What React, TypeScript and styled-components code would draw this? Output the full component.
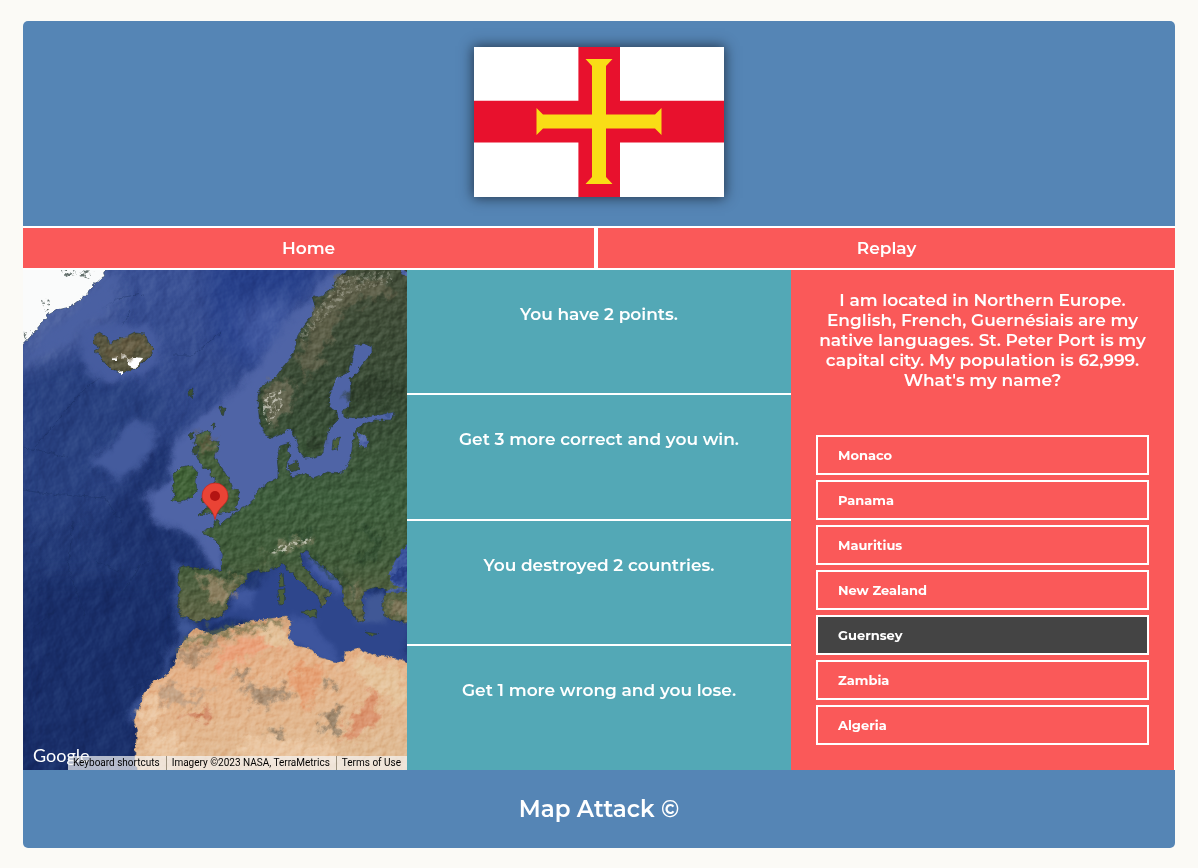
import { useState } from "react";
import styled, { createGlobalStyle } from "styled-components";

const colors = {
  page: "#fbfaf6",
  blue: "#5585b5",
  coral: "#fa5959",
  teal: "#53a8b6",
  dark: "#444444",
  line: "#ffffff",
};

const GlobalStyle = createGlobalStyle`
  * { box-sizing: border-box; }
  body {
    margin: 0;
    background: ${colors.page};
    color: #fff;
    font-family: Montserrat, Inter, "Liberation Sans", sans-serif;
  }
`;

const Page = styled.div`
  padding: 21px 23px 20px;
`;

const Game = styled.div`
  background: ${colors.line};
  border-radius: 5px;
  overflow: hidden;
`;

const Header = styled.header`
  display: flex;
  justify-content: center;
  padding: 26px 20px 29px;
  background: ${colors.blue};
`;

const FlagImage = styled.svg`
  display: block;
  width: 250px;
  height: 150px;
  box-shadow: 0 0 12px 1px rgba(20, 28, 40, 0.75);
`;

const Nav = styled.nav`
  display: grid;
  grid-template-columns: 99fr 100fr;
  gap: 4px;
  padding: 2px 0;
`;

const NavLink = styled.a`
  padding: 10px;
  background: ${colors.coral};
  color: #fff;
  font-size: 17px;
  font-weight: 600;
  line-height: 20px;
  text-align: center;
  text-decoration: none;
`;

const Board = styled.main`
  display: grid;
  grid-template-columns: repeat(3, minmax(0, 1fr));
  min-height: 500px;
`;

const MapPanel = styled.section`
  display: grid;
  grid-template: minmax(0, 1fr) / minmax(0, 1fr);
  overflow: hidden;
  background: #20386f;

  > * {
    grid-area: 1 / 1;
  }
`;

const MapImage = styled.svg`
  display: block;
  width: 100%;
  height: 100%;
`;

const MapLogo = styled.span`
  align-self: end;
  justify-self: start;
  padding: 0 0 3px 10px;
  font-family: Lato, sans-serif;
  font-size: 18px;
  line-height: 24px;
`;

const MapCredits = styled.div`
  align-self: end;
  justify-self: end;
  display: flex;
  height: 14px;
  background: rgba(245, 245, 245, 0.7);
  color: #000;
  font-family: Roboto, sans-serif;
  font-size: 10px;
  line-height: 14px;
  white-space: nowrap;

  > * {
    padding: 0 6px 0 5px;
  }
  > * + * {
    border-left: 1px solid rgba(120, 110, 90, 0.7);
  }
`;

const CreditButton = styled.button`
  border: 0;
  background: none;
  color: inherit;
  font: inherit;
  cursor: pointer;
`;

const CreditLink = styled.a`
  color: inherit;
  text-decoration: none;
`;

const Stats = styled.section`
  display: grid;
  grid-template-rows: 123fr 124fr 123fr 124fr;
  gap: 2px;
`;

const Stat = styled.p`
  margin: 0;
  padding: 34px 20px;
  background: ${colors.teal};
  font-size: 17px;
  font-weight: 600;
  line-height: 20px;
  text-align: center;
`;

const Quiz = styled.section`
  display: flex;
  flex-direction: column;
  gap: 45px;
  margin-right: 1px;
  padding: 20px 25px 25px;
  background: ${colors.coral};
`;

const Question = styled.p`
  margin: 0;
  font-size: 17px;
  font-weight: 600;
  line-height: 20px;
  text-align: center;
`;

const Answers = styled.div`
  display: flex;
  flex-direction: column;
  gap: 5px;
`;

const Answer = styled.button<{ $active: boolean }>`
  height: 40px;
  padding: 0 20px;
  border: 2px solid ${colors.line};
  background: ${({ $active }) => ($active ? colors.dark : colors.coral)};
  color: #fff;
  font-family: inherit;
  font-size: 13px;
  font-weight: 700;
  text-align: left;
  cursor: pointer;
`;

const Footer = styled.footer`
  padding: 24px 20px;
  background: ${colors.blue};
  font-size: 23px;
  font-weight: 600;
  line-height: 30px;
  text-align: center;
`;

function GuernseyFlag() {
  return (
    <FlagImage viewBox="0 0 250 150" role="img" aria-label="Flag">
      <rect width="250" height="150" fill="#fff" />
      <path d="M104.4 0h41.6v53.8H250v41.6H146V150h-41.6V95.4H0V53.8h104.4z" fill="#e8112d" />
      <path
        d="M111.5 12h27l-6.5 7v48.5h49l6.5-6.5v27l-6.5-6.5h-49V130l6.5 7h-27l6.5-7V81.500h-49L62.500 88V61l6.500 6.500h49V19z"
        fill="#f9dd16"
      />
    </FlagImage>
  );
}

const EUROPE =
  "M390 -5L325 -5L325 0L314 8L310 17L299 25L289 28L292 35L290 45L282 55L275 65L272 78L268 87L260 97L252 108L240 115L235 125L235 138L237 153L242 165L250 168L260 163L268 158L272 168L277 182L282 188L292 187L300 183L304 165L307 158L315 150L314 142L306 137L306 123L315 108L325 102L329 88L332 76L342 73L349 76L349 83L339 95L334 102L327 108L328 123L326 138L319 140L320 147L339 148L355 145L372 142L369 150L352 150L335 157L332 162L330 172L328 188L320 203L305 202L290 208L282 203L269 207L264 200L263 193L268 186L265 181L267 172L257 175L254 187L255 198L255 208L242 215L235 220L229 232L212 243L202 251L197 256L194 249L190 257L179 262L187 267L192 270L197 275L199 283L198 300L174 299L160 296L156 298L155 307L157 320L155 333L157 347L164 347L171 352L180 350L197 347L205 338L204 330L212 320L224 310L225 303L234 300L242 302L254 297L259 293L267 302L275 310L284 317L294 325L299 337L303 333L302 326L307 327L310 323L299 317L289 307L280 295L277 283L284 280L289 288L302 298L314 308L320 318L320 332L329 342L335 353L342 350L340 340L339 330L340 322L352 318L365 320L360 330L360 343L369 350L390 353Z";

const AFRICA =
  "M174 357L164 367L155 380L151 395L144 405L132 410L122 423L117 437L111 450L114 460L112 487L114 505L390 505L390 395L379 390L365 387L349 385L335 378L322 382L321 390L315 393L295 387L289 380L272 375L265 367L268 353L264 347L245 349L225 352L209 357L192 365L179 361Z";

const BRITAIN =
  "M174 165L180 161L188 162L186 170L196 172L192 187L199 198L205 208L209 218L217 222L215 230L212 236L214 240L199 243L190 244L184 243L175 247L180 240L190 234L179 231L180 225L189 222L192 213L192 208L187 207L188 199L180 198L174 185L175 177L172 172Z";

const IRELAND = "M157 198L169 196L174 202L172 212L173 222L167 228L157 232L149 231L151 225L149 218L152 212L150 205Z";

const ICELAND =
  "M70 67L77 63L84 67L86 75L94 69L104 67L112 63L122 64L125 72L130 77L129 84L120 93L109 100L97 103L89 100L82 93L77 85L71 82L77 78L71 74Z";

const GREENLAND = "M-5 -5L84 -5L84 0L79 8L69 17L60 27L47 37L34 40L25 45L17 55L7 67L-5 80Z";

function SatelliteMap() {
  return (
    <MapImage viewBox="0 0 384 500" preserveAspectRatio="xMidYMid slice" role="img" aria-label="Satellite map of Europe">
      <defs>
        <linearGradient id="ocean" x1="0" y1="0" x2="0" y2="1">
          <stop offset="0" stopColor="#3b5296" />
          <stop offset="0.3" stopColor="#2f4688" />
          <stop offset="0.5" stopColor="#253c7a" />
          <stop offset="0.75" stopColor="#1a306b" />
          <stop offset="1" stopColor="#162a64" />
        </linearGradient>
        <linearGradient id="europe" x1="0" y1="0" x2="0" y2="1">
          <stop offset="0" stopColor="#424c38" />
          <stop offset="0.4" stopColor="#364933" />
          <stop offset="0.65" stopColor="#3d5c3b" />
          <stop offset="0.82" stopColor="#405a39" />
          <stop offset="1" stopColor="#5f6344" />
        </linearGradient>
        <linearGradient id="sahara" x1="0" y1="0" x2="0.3" y2="1">
          <stop offset="0" stopColor="#cf9f78" />
          <stop offset="0.4" stopColor="#e5b288" />
          <stop offset="1" stopColor="#e0ba92" />
        </linearGradient>
        <filter id="soft" x="-20%" y="-20%" width="140%" height="140%" colorInterpolationFilters="sRGB">
          <feGaussianBlur stdDeviation="3" result="b" />
          <feTurbulence type="fractalNoise" baseFrequency="0.04" numOctaves="4" seed="5" result="n" />
          <feDisplacementMap in="b" in2="n" scale="18" xChannelSelector="R" yChannelSelector="G" />
        </filter>
        <filter id="softer" x="-30%" y="-30%" width="160%" height="160%" colorInterpolationFilters="sRGB">
          <feGaussianBlur stdDeviation="9" />
        </filter>
        <filter id="coast" x="-5%" y="-5%" width="110%" height="110%" colorInterpolationFilters="sRGB">
          <feTurbulence type="fractalNoise" baseFrequency="0.18" numOctaves="3" seed="4" result="n" />
          <feDisplacementMap in="SourceGraphic" in2="n" scale="5" xChannelSelector="R" yChannelSelector="G" />
          <feGaussianBlur stdDeviation="0.4" />
        </filter>
        <filter id="blotch" x="-20%" y="-20%" width="140%" height="140%" colorInterpolationFilters="sRGB">
          <feGaussianBlur stdDeviation="2" result="b" />
          <feTurbulence type="fractalNoise" baseFrequency="0.09" numOctaves="4" seed="9" result="n" />
          <feDisplacementMap in="b" in2="n" scale="26" xChannelSelector="R" yChannelSelector="G" />
        </filter>
        <filter id="snow" x="-20%" y="-20%" width="140%" height="140%" colorInterpolationFilters="sRGB">
          <feTurbulence type="fractalNoise" baseFrequency="0.28" numOctaves="3" seed="2" result="n" />
          <feColorMatrix in="n" values="0 0 0 0 1  0 0 0 0 1  0 0 0 0 1  5 0 0 0 -2.4" result="m" />
          <feComposite in="SourceGraphic" in2="m" operator="in" />
        </filter>
        <filter id="relief" x="0" y="0" width="100%" height="100%" colorInterpolationFilters="sRGB">
          <feTurbulence type="fractalNoise" baseFrequency="0.13" numOctaves="5" seed="7" result="n" />
          <feDiffuseLighting in="n" surfaceScale="1.3" lightingColor="#fff" result="l">
            <feDistantLight azimuth="225" elevation="32" />
          </feDiffuseLighting>
          <feComposite in="l" in2="SourceGraphic" operator="in" />
        </filter>
        <filter id="seabed" x="0" y="0" width="100%" height="100%" colorInterpolationFilters="sRGB">
          <feTurbulence type="fractalNoise" baseFrequency="0.035 0.03" numOctaves="5" seed="12" result="n" />
          <feDiffuseLighting in="n" surfaceScale="2.5" lightingColor="#fff">
            <feDistantLight azimuth="205" elevation="31" />
          </feDiffuseLighting>
        </filter>
      </defs>

      <rect width="384" height="500" fill="url(#ocean)" />
      <g filter="url(#softer)">
        <path d="M182 -10H305L270 35L225 100L190 70Z" fill="#27408a" />
        <path d="M0 100L60 90L125 120L150 130L135 150L100 175L60 230L0 260Z" fill="#28407f" />
        <path d="M0 310H150V500H0Z" fill="#192e69" />
        <path d="M140 165L155 185L130 240L185 285L140 310L70 270Z" fill="#1c316d" />
        <path d="M0 10L95 0L90 55L0 105Z" fill="#4b609f" />
        <path d="M215 40L245 28L270 35L262 75L235 95L215 70Z" fill="#4058a0" />
      </g>
      <rect width="384" height="500" filter="url(#seabed)" style={{ mixBlendMode: "soft-light" }} opacity="0.42" />
      <g fill="none" stroke="#142957" strokeWidth="1" opacity="0.35" filter="url(#coast)">
        <path d="M0 178L16 180L45 187M0 220L25 224L82 228M50 252L45 298L62 345M8 360L32 340M150 85L170 85L198 62M72 290L95 302M12 177L60 120L82 104M82 228L98 252" />
        <path d="M98 58L108 40M78 40L95 28L120 24M130 470L140 455M105 420L135 405M100 322L118 295L132 288" />
      </g>
      <g filter="url(#soft)">
        <path d="M92 165L118 150L133 165L130 185L98 212L88 200L65 190Z" fill="#445b9d" />
        <path d="M0 95L20 68L80 10L95 5L90 35L50 68L18 88L0 98Z" fill="#4a60a2" />
        <path d="M62 60L85 55L120 52L140 72L138 92L118 108L85 112L55 95Z" fill="#465c9f" />
        <path d="M330 -5L384 -5V220L280 220L215 262L165 250L130 242L120 228L145 205L150 175L185 140L215 115L238 90L270 45L290 20Z" fill="#4f64a6" />
        <path d="M155 200L225 200L240 225L200 262L206 300L190 302L172 268L128 247L122 228Z" fill="#4f64a6" />
        <path d="M150 295H160V350L178 356L160 372L110 460L105 450L135 405L155 370Z" fill="#3f5899" />
        <path d="M165 352L195 345L260 290L320 300L384 350V400L260 395L240 350Z" fill="#2e468c" />
        <path d="M205 325L224 315L235 320L225 336L210 340Z" fill="#40589f" />
        <path d="M262 345L292 350L310 380L315 398L285 385L262 365Z" fill="#3d559d" />
        <path d="M275 280L290 285L322 312L318 325L300 315Z" fill="#465ca5" />
        <path d="M340 325H363V355L335 355Z" fill="#405896" />
      </g>

      <g filter="url(#coast)">
        <path d={GREENLAND} fill="#fafbfb" stroke="#2c4058" strokeWidth="0.600" />
        <g stroke="#263b34" strokeWidth="0.600">
          <path d={ICELAND} fill="#57553e" />
          <path d={IRELAND} fill="#3f6035" />
          <path d={BRITAIN} fill="#425c39" />
          <path d={EUROPE} fill="url(#europe)" />
          <path d="M256 306L260 303L261 316L257 317ZM255 320L262 319L261 334L256 335ZM278 342L294 340L293 349ZM342 362L355 364L348 366ZM310 170L317 167L314 179L309 180Z" fill="#4b5f3a" />
          <path d="M265 195L274 191L277 199L268 202ZM165 120L171 118L168 128ZM197 138L202 137L200 146ZM188 155L192 153L191 160ZM165 165L171 162L169 170ZM171 176L175 176L173 185L169 182Z" fill="#3b4f36" />
        </g>
        <path d={AFRICA} fill="url(#sahara)" stroke="#b89570" strokeWidth="0.600" />
        <path d="M390 272L384 275L374 287L366 303L369 315L390 320Z" fill="#3a529b" />
        <path d="M392 292L376 298L368 308L372 314L392 317Z" fill="#2b428c" />
        <path d="M335 163L342 164L346 172L343 178L336 175Z" fill="#4f64a6" />
        <path d="M380 -3L388 8L378 4Z" fill="#4f64a6" />
        <path d="M363 320L384 318V322L364 323ZM360 145L368 143L366 148Z" fill="#405896" />
        <path d="M104 89L110 87L120 88L118 92L111 98L105 95ZM98 84L102 84L103 88L98 89ZM89 88L94 86L94 91L90 91ZM95 101L99 100L99 104L96 103Z" fill="#fff" />
      </g>

      <g filter="url(#blotch)" opacity="0.65">
        <path d="M178 162L190 168L188 182L180 190ZM82 78L115 68L125 80L95 92Z" fill="#6b5f45" />
        <path d="M315 8L355 8L375 25L340 28L315 45L303 80L285 108L276 90L290 46Z" fill="#6b6750" />
        <path d="M240 120L262 108L276 122L256 156L242 152Z" fill="#7b745e" />
        <path d="M175 308L200 306L208 318L203 340L182 330L185 318Z" fill="#aa9071" />
        <path d="M206 308L220 310L210 318Z" fill="#948261" />
        <path d="M240 288L262 272L292 268L282 276L252 284Z" fill="#8b8769" />
        <path d="M320 315L340 318L328 335ZM366 330L388 330V348L370 345Z" fill="#96856a" />
        <path d="M340 255L358 272L352 286L332 288M285 285L305 300L330 318L328 330M265 268L292 262M200 303L222 306" stroke="#213e26" strokeWidth="4" fill="none" />
        <path d="M300 170L292 165L280 170L284 182L298 180ZM318 125L345 105L384 118L384 128L345 132Z" fill="#2c3b29" />
        <path d="M176 361L215 356L262 350L258 357L215 362L165 375L152 392L156 380Z" fill="#5d6944" />
      </g>
      <g filter="url(#blotch)" opacity="0.75">
        <path d="M155 395L165 380L200 366L188 380L165 395Z" fill="#a08468" />
        <path d="M190 385L215 370L250 368L258 378L225 385L200 400Z" fill="#ee9f78" />
        <path d="M265 400L300 392L295 412L285 440L272 425Z" fill="#e69a6c" />
        <path d="M340 430L352 418L356 448L335 472L318 468Z" fill="#d98863" />
        <path d="M155 446L190 440L182 452Z" fill="#c97352" />
        <path d="M138 415L150 410L162 428L190 415L175 435L145 435Z" fill="#b99b80" />
        <path d="M210 402L228 398L228 410L212 410ZM215 420L262 416L268 428L250 428L240 442L232 430Z" fill="#94806a" />
        <path d="M298 445L318 436L316 460L306 465ZM302 408L311 408L310 418L303 417ZM248 460L262 462L254 476Z" fill="#83745f" />
        <path d="M220 465L300 475L330 492L220 490ZM125 460L165 470L150 490L120 485ZM115 440L135 420L142 440L125 458Z" fill="#edcaa6" />
        <path d="M325 390L378 398L384 440L345 415ZM230 358L262 356L262 378L240 370Z" fill="#e6c8a0" />
      </g>
      <g fill="#ede9df" filter="url(#snow)">
        <path d="M318 5L365 0L370 12L325 24L300 50L280 72L276 64L296 38Z" opacity="0.28" />
        <path d="M240 125L258 120L260 135L246 155L240 145Z" opacity="0.6" />
        <path d="M246 283L258 275L292 266L285 273L255 284Z" opacity="0.65" />
      </g>
      <g fill="#65716d" filter="url(#snow)">
        <path d="M38 0H72L66 9L52 5L42 8ZM18 30L26 28L28 38L22 42ZM0 62L8 60L2 70Z" />
      </g>
      <g filter="url(#relief)" opacity="0.55" style={{ mixBlendMode: "soft-light" }}>
        <path d={EUROPE} />
        <path d={AFRICA} />
        <path d={BRITAIN} />
        <path d={IRELAND} />
        <path d={ICELAND} />
      </g>

      <path
        d="M192 249.500C190 241 186.500 238 183 234.500C180.500 232 179 229 179 226A13 13 0 0 1 205 226C205 229 203.500 232 201 234.500C197.500 238 194 241 192 249.500Z"
        fill="#ea4335"
        stroke="#c5221f"
        strokeWidth="0.700"
      />
      <circle cx="192" cy="226" r="5" fill="#b31412" />
    </MapImage>
  );
}

const stats = [
  "You have 2 points.",
  "Get 3 more correct and you win.",
  "You destroyed 2 countries.",
  "Get 1 more wrong and you lose.",
];

const countries = ["Monaco", "Panama", "Mauritius", "New Zealand", "Guernsey", "Zambia", "Algeria"];

export default function App() {
  const [selected, setSelected] = useState("Guernsey");

  return (
    <Page>
      <GlobalStyle />
      <Game>
        <Header>
          <GuernseyFlag />
        </Header>
        <Nav>
          <NavLink href="#home">Home</NavLink>
          <NavLink href="#replay">Replay</NavLink>
        </Nav>
        <Board>
          <MapPanel>
            <SatelliteMap />
            <MapLogo>Google</MapLogo>
            <MapCredits>
              <CreditButton type="button">Keyboard shortcuts</CreditButton>
              <span>Imagery ©2023 NASA, TerraMetrics</span>
              <CreditLink href="#terms">Terms of Use</CreditLink>
            </MapCredits>
          </MapPanel>
          <Stats>
            {stats.map((text) => (
              <Stat key={text}>{text}</Stat>
            ))}
          </Stats>
          <Quiz>
            <Question>
              I am located in Northern Europe. English, French, Guernésiais are my native languages. St. Peter Port is
              my capital city. My population is 62,999. What's my name?
            </Question>
            <Answers>
              {countries.map((name) => (
                <Answer key={name} type="button" $active={name === selected} onClick={() => setSelected(name)}>
                  {name}
                </Answer>
              ))}
            </Answers>
          </Quiz>
        </Board>
        <Footer>Map Attack ©</Footer>
      </Game>
    </Page>
  );
}
